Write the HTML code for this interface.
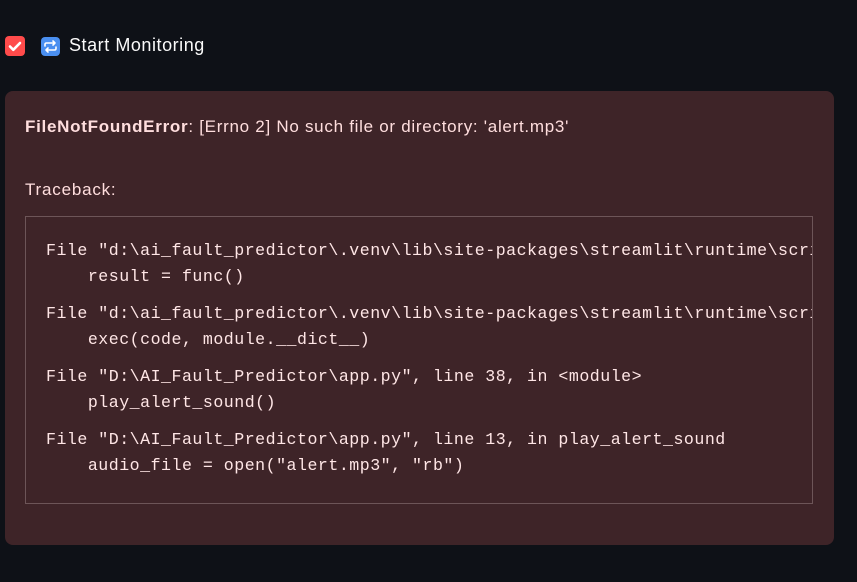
<!DOCTYPE html>
<html><head><meta charset="utf-8"><style>
html,body{margin:0;padding:0;background:#0e1117;width:857px;height:582px;overflow:hidden;font-family:"Liberation Sans",sans-serif;color:#fafafa}
.cb{position:absolute;left:5px;top:36px;width:20px;height:20px;background:#ff4b4b;border-radius:4px}
.ic{position:absolute;left:41px;top:37px;width:19px;height:19px;background:#4a8ff0;border-radius:4px}
.lbl{position:absolute;left:69px;top:35px;font-size:18px;letter-spacing:0.55px}
.box{position:absolute;left:5px;top:91px;width:829px;height:454px;background:#3e2428;border-radius:8px;color:#ffdede}
.t1{position:absolute;left:20px;top:26px;font-size:17px;letter-spacing:0.72px}
.t2{position:absolute;left:20px;top:89px;font-size:17px;letter-spacing:0.8px}
.code{position:absolute;left:20px;top:125px;width:786px;height:286px;border:1px solid #6d5558;overflow:hidden}
pre{margin:0;position:absolute;left:20px;top:21px;font-family:"Liberation Mono",monospace;font-size:16.6px;letter-spacing:0.5px;line-height:25.5px;color:#ffe6e6;white-space:pre}
.g{height:12px}
</style></head><body>
<div class="cb"><svg width="20" height="20" viewBox="0 0 20 20"><path d="M5 10.5l3.3 3.3L15 7" fill="none" stroke="#fff" stroke-width="2.6" stroke-linecap="round" stroke-linejoin="round"/></svg></div>
<div class="ic"><svg width="19" height="19" viewBox="0 0 19 19"><path d="M4 9V7.5Q4 6 5.5 6H14M12 4l2 2-2 2M15 10v1.5Q15 13 13.5 13H5M7 15l-2-2 2-2" fill="none" stroke="#fff" stroke-width="1.6" stroke-linecap="round" stroke-linejoin="round"/></svg></div>
<div class="lbl">Start Monitoring</div>
<div class="box">
<div class="t1"><b>FileNotFoundError</b>: [Errno 2] No such file or directory: 'alert.mp3'</div>
<div class="t2">Traceback:</div>
<div class="code"><pre>File "d:\ai_fault_predictor\.venv\lib\site-packages\streamlit\runtime\scriptrunner\exec_code.py"
    result = func()
<div class="g"></div>File "d:\ai_fault_predictor\.venv\lib\site-packages\streamlit\runtime\scriptrunner\script_runner.py"
    exec(code, module.__dict__)
<div class="g"></div>File "D:\AI_Fault_Predictor\app.py", line 38, in &lt;module&gt;
    play_alert_sound()
<div class="g"></div>File "D:\AI_Fault_Predictor\app.py", line 13, in play_alert_sound
    audio_file = open("alert.mp3", "rb")</pre></div>
</div>
</body></html>
